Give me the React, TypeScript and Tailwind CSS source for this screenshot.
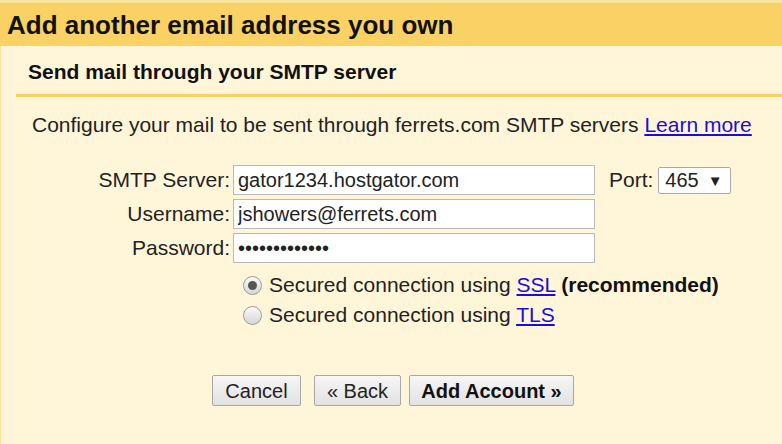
import React from "react";

const inputCls =
  "w-[362px] h-[30px] bg-white border border-[#b9b9b9] px-[4px] text-[20px] text-[#222] outline-none";

function Field({ label, value, password }: { label: string; value: string; password?: boolean }) {
  return (
    <div className="flex items-center h-[34px]">
      <label className="w-[233px] text-right pr-[3px]">{label}</label>
      <input type={password ? "password" : "text"} defaultValue={value} readOnly className={inputCls} />
    </div>
  );
}

function Radio({ checked }: { checked?: boolean }) {
  return (
    <span className="w-[19px] h-[19px] rounded-full border border-[#9a9a9a] bg-gradient-to-b from-[#fafafa] to-[#d6d6d6] flex items-center justify-center shrink-0">
      {checked && <span className="w-[9px] h-[9px] rounded-full bg-[#555]" />}
    </span>
  );
}

export default function App() {
  return (
    <div
      className="w-[782px] h-[444px] overflow-hidden bg-[#fff6d9] text-[#222] text-[21px]"
      style={{ fontFamily: '"Liberation Sans", Arial, sans-serif' }}
    >
      {/* Title band */}
      <div className="h-[46px] border-t-[3px] border-[#fce39e] bg-[#fad165] pl-[7px] flex items-center">
        <h1 className="text-[26px] font-bold text-[#111] leading-none">Add another email address you own</h1>
      </div>

      <div className="border-l border-[#fbe19a] h-[398px] pl-[15px]">
        <div className="h-[51px] border-b-[3px] border-[#fad165] flex items-center pl-[12px] pt-[2px]">
          <h2 className="text-[21px] font-bold text-[#111] leading-none">Send mail through your SMTP server</h2>
        </div>

        <p className="mt-[17px] pl-[16px] leading-[22px]">
          Configure your mail to be sent through ferrets.com SMTP servers{" "}
          <a href="#" className="text-[#1a0dda] underline">Learn more</a>
        </p>

        <div className="mt-[27px] ml-[-16px]">
          <div className="flex items-center h-[34px]">
            <label className="w-[233px] text-right pr-[3px]">SMTP Server:</label>
            <input type="text" defaultValue="gator1234.hostgator.com" readOnly className={inputCls} />
            <span className="ml-[14px]">Port:</span>
            <div className="ml-[5px] w-[73px] h-[27px] bg-white border border-[#a9a9a9] rounded-[2px] flex items-center pl-[6px] gap-[9px]">
              <span className="text-[20px]">465</span>
              <span className="text-[15px] leading-none">▼</span>
            </div>
          </div>
          <Field label="Username:" value="jshowers@ferrets.com" />
          <Field label="Password:" value="jshowers20171" password />
        </div>

        <div className="mt-[10px] ml-[227px] flex flex-col gap-[10px]">
          <label className="flex items-center gap-[7px] h-[20px]">
            <Radio checked />
            <span>
              Secured connection using <a href="#" className="text-[#1a0dda] underline">SSL</a>{" "}
              <b className="text-[#111]">(recommended)</b>
            </span>
          </label>
          <label className="flex items-center gap-[7px] h-[20px]">
            <Radio />
            <span>
              Secured connection using <a href="#" className="text-[#1a0dda] underline">TLS</a>
            </span>
          </label>
        </div>

        <div className="mt-[50px] ml-[196px] flex items-center">
          <button className="w-[89px] h-[31px] border border-[#a7a7a7] rounded-[2px] bg-gradient-to-b from-[#f6f6f6] to-[#e2e2e2] text-[20px] text-[#222]">
            Cancel
          </button>
          <button className="ml-[13px] w-[87px] h-[31px] border border-[#a7a7a7] rounded-[2px] bg-gradient-to-b from-[#f6f6f6] to-[#e2e2e2] text-[20px] text-[#222]">
            « Back
          </button>
          <button className="ml-[8px] w-[165px] h-[31px] border border-[#a7a7a7] rounded-[2px] bg-gradient-to-b from-[#f6f6f6] to-[#e2e2e2] text-[20px] font-bold text-[#111]">
            Add Account »
          </button>
        </div>
      </div>
    </div>
  );
}
